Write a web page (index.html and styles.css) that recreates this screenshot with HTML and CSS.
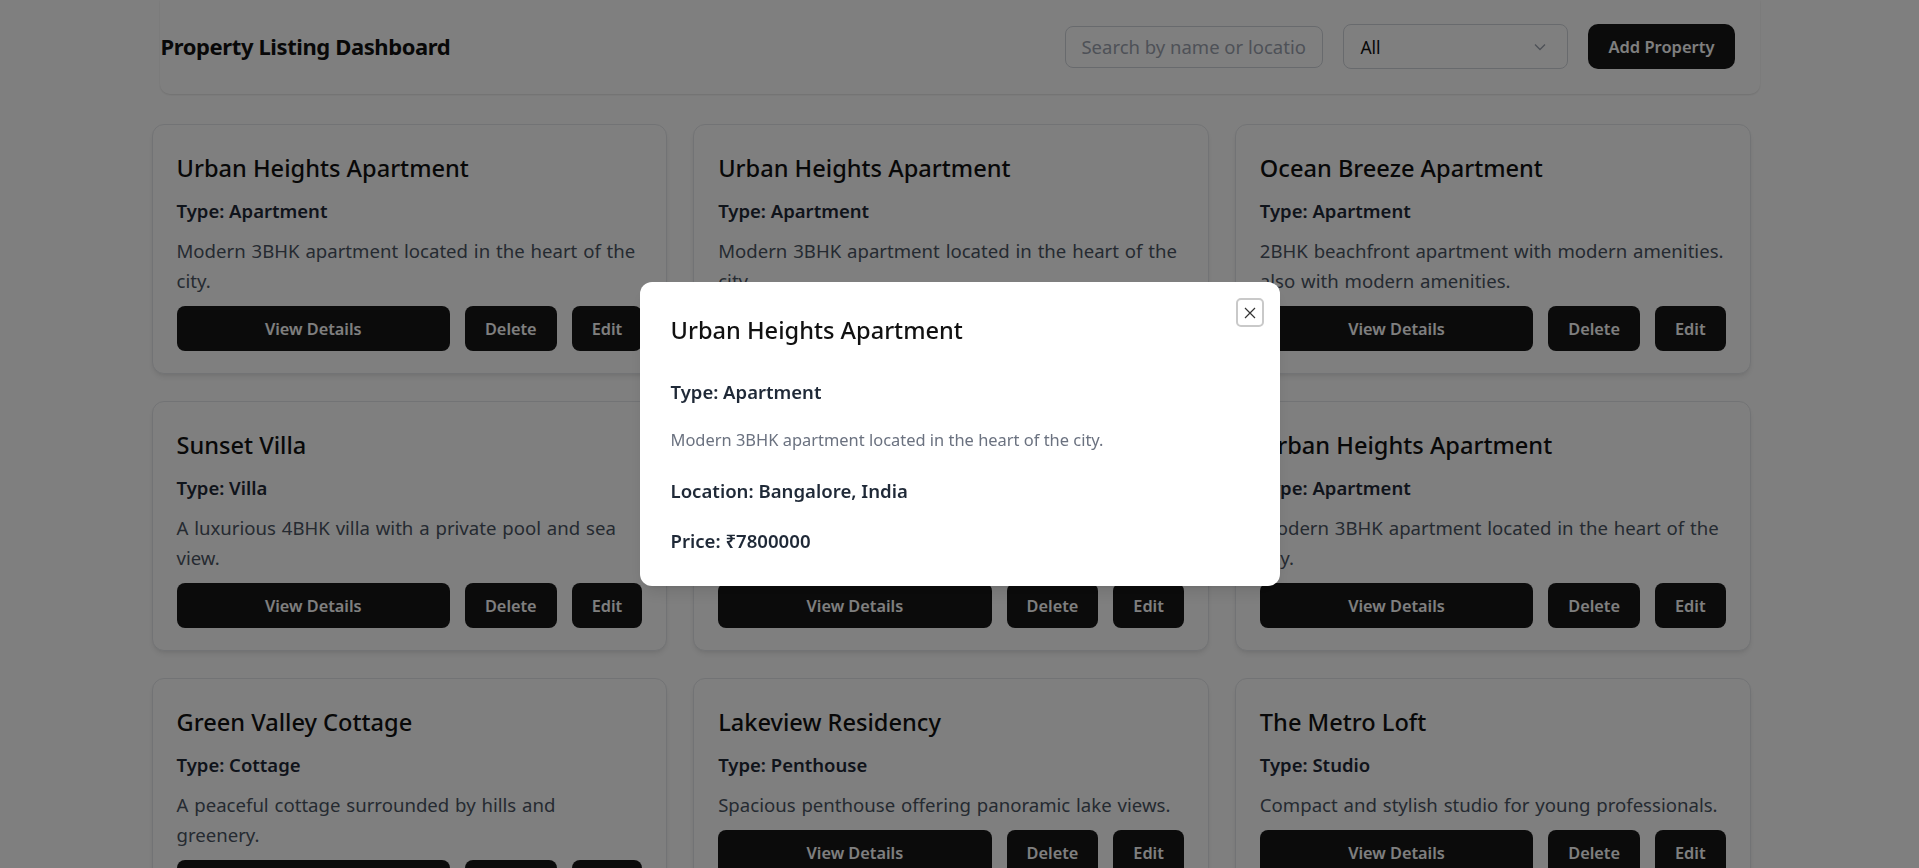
FILE: index.html
```html
<!DOCTYPE html>
<html lang="en">
<head>
<meta charset="utf-8">
<title>Property Listing Dashboard</title>
<link rel="stylesheet" href="styles.css">
</head>
<body>
<div class="page">
  <header class="topbar">
    <h1 class="brand">Property Listing Dashboard</h1>
    <div class="controls">
      <input class="search" type="text" placeholder="Search by name or location">
      <div class="select">
        <span class="select-value">All</span>
        <svg class="chev" width="12" height="8" viewBox="0 0 12 8"><path d="M1 1.5l5 5 5-5" fill="none" stroke="#9ca3af" stroke-width="1.4"/></svg>
      </div>
      <button class="btn btn-add">Add Property</button>
    </div>
  </header>

  <main class="grid">
    <article class="card">
      <h2 class="card-title">Urban Heights Apartment</h2>
      <p class="card-type">Type: Apartment</p>
      <p class="card-desc">Modern 3BHK apartment located in the heart of the city.</p>
      <div class="actions"><button class="btn btn-view">View Details</button><button class="btn">Delete</button><button class="btn">Edit</button></div>
    </article>
    <article class="card">
      <h2 class="card-title">Urban Heights Apartment</h2>
      <p class="card-type">Type: Apartment</p>
      <p class="card-desc">Modern 3BHK apartment located in the heart of the city.</p>
      <div class="actions"><button class="btn btn-view">View Details</button><button class="btn">Delete</button><button class="btn">Edit</button></div>
    </article>
    <article class="card">
      <h2 class="card-title">Ocean Breeze Apartment</h2>
      <p class="card-type">Type: Apartment</p>
      <p class="card-desc">2BHK beachfront apartment with modern amenities. also with modern amenities.</p>
      <div class="actions"><button class="btn btn-view">View Details</button><button class="btn">Delete</button><button class="btn">Edit</button></div>
    </article>
    <article class="card">
      <h2 class="card-title">Sunset Villa</h2>
      <p class="card-type">Type: Villa</p>
      <p class="card-desc">A luxurious 4BHK villa with a private pool and sea view.</p>
      <div class="actions"><button class="btn btn-view">View Details</button><button class="btn">Delete</button><button class="btn">Edit</button></div>
    </article>
    <article class="card">
      <h2 class="card-title">Skyline Residency</h2>
      <p class="card-type">Type: Apartment</p>
      <p class="card-desc">Elegant 3BHK apartment with skyline views and a rooftop garden.</p>
      <div class="actions"><button class="btn btn-view">View Details</button><button class="btn">Delete</button><button class="btn">Edit</button></div>
    </article>
    <article class="card">
      <h2 class="card-title">Urban Heights Apartment</h2>
      <p class="card-type">Type: Apartment</p>
      <p class="card-desc">Modern 3BHK apartment located in the heart of the city.</p>
      <div class="actions"><button class="btn btn-view">View Details</button><button class="btn">Delete</button><button class="btn">Edit</button></div>
    </article>
    <article class="card">
      <h2 class="card-title">Green Valley Cottage</h2>
      <p class="card-type">Type: Cottage</p>
      <p class="card-desc">A peaceful cottage surrounded by hills and greenery.</p>
      <div class="actions"><button class="btn btn-view">View Details</button><button class="btn">Delete</button><button class="btn">Edit</button></div>
    </article>
    <article class="card">
      <h2 class="card-title">Lakeview Residency</h2>
      <p class="card-type">Type: Penthouse</p>
      <p class="card-desc">Spacious penthouse offering panoramic lake views.</p>
      <div class="actions"><button class="btn btn-view">View Details</button><button class="btn">Delete</button><button class="btn">Edit</button></div>
    </article>
    <article class="card">
      <h2 class="card-title">The Metro Loft</h2>
      <p class="card-type">Type: Studio</p>
      <p class="card-desc">Compact and stylish studio for young professionals.</p>
      <div class="actions"><button class="btn btn-view">View Details</button><button class="btn">Delete</button><button class="btn">Edit</button></div>
    </article>
  </main>
</div>

<div class="overlay">
  <div class="modal">
    <button class="close" aria-label="Close">
      <svg width="12" height="12" viewBox="0 0 12 12"><path d="M1 1l10 10M11 1L1 11" stroke="#333" stroke-width="1.2" fill="none"/></svg>
    </button>
    <h2 class="modal-title">Urban Heights Apartment</h2>
    <p class="modal-type">Type: Apartment</p>
    <p class="modal-desc">Modern 3BHK apartment located in the heart of the city.</p>
    <p class="modal-row">Location: Bangalore, India</p>
    <p class="modal-row">Price: ₹7800000</p>
  </div>
</div>
</body>
</html>
```

FILE: styles.css
```css
* { box-sizing: border-box; }
html, body { margin: 0; padding: 0; overflow: hidden; }
body {
  background: #ffffff;
  font-family: "Noto Sans", "Open Sans", sans-serif;
  color: #111111;
  height: 868px;
}
.page { width: 1600px; margin: 0 auto; }

.topbar {
  display: flex;
  align-items: center;
  justify-content: space-between;
  height: 94px;
  padding: 0 25px 1px 1px;
  border-radius: 0 0 10px 10px;
  box-shadow: 0 1px 2px rgba(0, 0, 0, 0.12);
}
.brand { margin: 0; font-size: 22px; font-weight: 700; letter-spacing: -0.4px; line-height: 35px; color: #111111; }
.controls { display: flex; align-items: center; gap: 20px; }
.search {
  width: 258px; height: 42px;
  border: 1px solid #d1d5db; border-radius: 8px;
  padding: 0 15px;
  font-family: inherit; font-size: 18.5px; color: #111;
  outline: none;
}
.search::placeholder { color: #9ca3af; }
.select {
  width: 225px; height: 45px;
  border: 1px solid #d1d5db; border-radius: 8px;
  padding: 0 21px 0 16px;
  display: flex; align-items: center; justify-content: space-between;
  font-size: 17.5px; color: #111;
}
.chev { display: block; }

.btn {
  height: 45px;
  padding: 0 20px;
  border: none; border-radius: 8px;
  background: #171717; color: #ffffff;
  font-family: inherit; font-size: 16.3px; font-weight: 600;
  cursor: pointer;
}
.btn-add { border-radius: 10px; font-size: 16.5px; }

.grid {
  display: grid;
  grid-template-columns: repeat(3, 1fr);
  gap: 27px 26px;
  margin: 30px 9px 0 -8px;
  align-items: start;
}
.card {
  border: 1px solid #e5e7eb;
  border-radius: 12px;
  padding: 26px 24px 22px;
  background: #fff;
  box-shadow: 0 4px 6px -1px rgba(0,0,0,0.08), 0 2px 4px -2px rgba(0,0,0,0.08);
}
.card-title { margin: 0 0 10px; font-size: 23.6px; font-weight: 500; line-height: 35px; color: #111111; }
.card-type { margin: 0 0 10px; font-size: 18.5px; font-weight: 600; line-height: 30px; color: #1f2937; }
.card-desc { margin: 0 0 10px; font-size: 18.6px; word-spacing: 1px; line-height: 30px; color: #4b5563; }
.actions { display: flex; gap: 15px; }
.btn-view { flex: 1; }

.overlay {
  position: fixed; inset: 0;
  background: rgba(0, 0, 0, 0.5);
  display: flex; align-items: center; justify-content: center;
}
.modal {
  position: relative;
  width: 640px;
  background: #fff;
  border-radius: 12px;
  padding: 31px 30px 30px 31px;
  box-shadow: 0 10px 15px -3px rgba(0,0,0,0.1), 0 4px 6px -4px rgba(0,0,0,0.1);
}
.close {
  position: absolute; top: 16px; right: 16px;
  width: 28px; height: 29px;
  border: 2px solid #c9c9c9; border-radius: 5px;
  background: #fff; padding: 0;
  display: flex; align-items: center; justify-content: center;
}
.modal-title { margin: 0 0 29px; font-size: 23.6px; font-weight: 500; line-height: 35px; color: #111111; }
.modal-type { margin: 0 0 20px; font-size: 18.5px; font-weight: 600; line-height: 30px; color: #1f2937; }
.modal-desc { margin: 0 0 24px; font-size: 16.45px; line-height: 25px; color: #6b7280; }
.modal-row { margin: 0 0 20px; font-size: 18.6px; font-weight: 600; line-height: 30px; color: #1f2937; }
.modal-row:last-child { margin-bottom: 0; }
```
